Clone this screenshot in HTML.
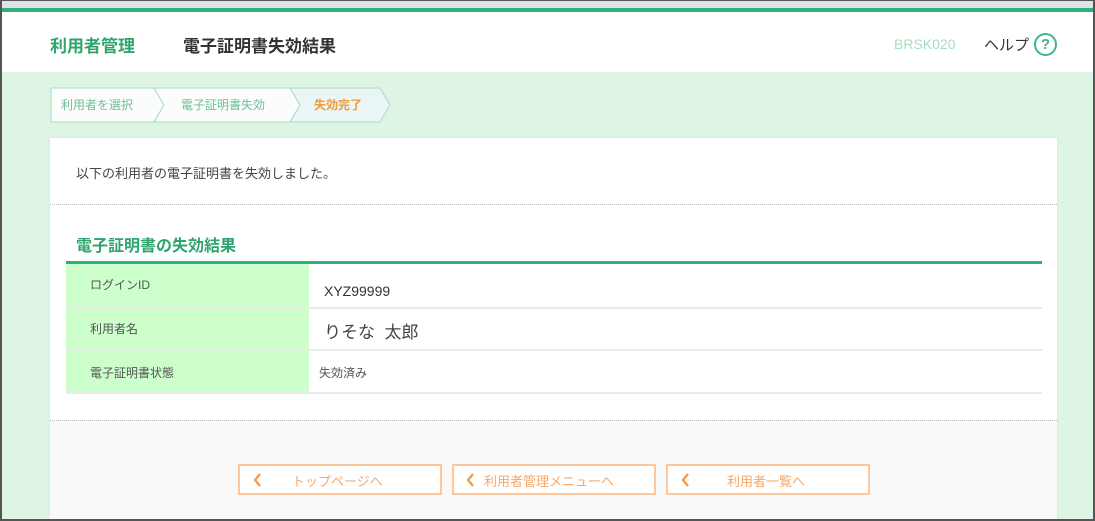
<!DOCTYPE html>
<html><head><meta charset="utf-8"><style>
*{margin:0;padding:0;box-sizing:border-box}
body{width:1095px;height:521px;overflow:hidden;font-family:"Liberation Sans","Noto Sans CJK JP",sans-serif;background:#fff;position:relative}
.abs{position:absolute}
.t{white-space:nowrap}
</style></head><body>
<div class="abs" style="left:0;top:0;width:1095px;height:521px;background:#dff5e3"></div>
<div class="abs" style="left:0;top:0;width:1095px;height:8px;background:#dfe3e6"></div>
<div class="abs" style="left:0;top:8px;width:1095px;height:4px;background:#2fb27a"></div>
<div class="abs" style="left:0;top:12px;width:1095px;height:60px;background:#fff"></div>
<div class="abs t" style="left:50px;top:32px;font-size:17px;font-weight:bold;color:#2fa56e">利用者管理</div>
<div class="abs t" style="left:183px;top:32px;font-size:17px;font-weight:bold;color:#333">電子証明書失効結果</div>
<div class="abs t" style="left:894px;top:36px;font-size:14px;color:#a8dcc0">BRSK020</div>
<div class="abs t" style="left:984px;top:34px;font-size:15px;color:#333">ヘルプ</div>
<div class="abs" style="left:1034px;top:33px;width:23px;height:23px;border:2px solid #3cb887;border-radius:50%;color:#3cb887;font-size:15px;font-weight:bold;text-align:center;line-height:19px">?</div>
<svg class="abs" style="left:50px;top:87px" width="345" height="37">
<polygon points="1,1 104,1 114,18 104,35 1,35" fill="#fafdfb" stroke="#a8dcc0"/>
<polygon points="104,1 240,1 250,18 240,35 104,35 114,18" fill="#fafdfb" stroke="#a8dcc0"/>
<polygon points="240,1 330,1 340,18 330,35 240,35 250,18" fill="#eaf5f7" stroke="#a8dcc0"/>
<text x="11" y="22" font-size="12" fill="#6fbf97" font-family="Liberation Sans,Noto Sans CJK JP,sans-serif">利用者を選択</text>
<text x="131" y="22" font-size="12" fill="#6fbf97" font-family="Liberation Sans,Noto Sans CJK JP,sans-serif">電子証明書失効</text>
<text x="264" y="22" font-size="12" font-weight="bold" fill="#f39a3c" font-family="Liberation Sans,Noto Sans CJK JP,sans-serif">失効完了</text>
</svg>
<div class="abs" style="left:50px;top:138px;width:1007px;height:383px;background:#fff;box-shadow:0 0 2px #cde"></div>
<div class="abs t" style="left:76px;top:163px;font-size:13px;color:#444">以下の利用者の電子証明書を失効しました。</div>
<div class="abs" style="left:50px;top:204px;width:1007px;border-top:1px dotted #bbb"></div>
<div class="abs t" style="left:76px;top:232px;font-size:16px;font-weight:bold;color:#2fa56e">電子証明書の失効結果</div>
<div class="abs" style="left:66px;top:261px;width:976px;height:3px;background:#2fb27a"></div>
<div class="abs" style="left:66px;top:264px;width:243px;height:128px;background:#ccffcc"></div>
<div class="abs" style="left:66px;top:307px;width:976px;height:2px;background:#e8ece9"></div>
<div class="abs" style="left:66px;top:349px;width:976px;height:2px;background:#e8ece9"></div>
<div class="abs" style="left:66px;top:392px;width:976px;height:2px;background:#e8ece9"></div>
<div class="abs t" style="left:90px;top:276px;font-size:12px;color:#555">ログインID</div>
<div class="abs t" style="left:324px;top:283px;font-size:14px;color:#333">XYZ99999</div>
<div class="abs t" style="left:90px;top:320px;font-size:12px;color:#555">利用者名</div>
<div class="abs t" style="left:324px;top:318px;font-size:17px;color:#444">りそな&nbsp;&nbsp;太郎</div>
<div class="abs t" style="left:90px;top:364px;font-size:12px;color:#555">電子証明書状態</div>
<div class="abs t" style="left:319px;top:364px;font-size:12px;color:#555">失効済み</div>
<div class="abs" style="left:50px;top:420px;width:1007px;height:101px;background:#f9f9f9;border-top:1px dotted #bbb"></div>
<div class="abs" style="left:238px;top:464px;width:204px;height:31px;border:2px solid #fcc79a;background:#fff"></div>
<div class="abs" style="left:452px;top:464px;width:204px;height:31px;border:2px solid #fcc79a;background:#fff"></div>
<div class="abs" style="left:666px;top:464px;width:204px;height:31px;border:2px solid #fcc79a;background:#fff"></div>
<svg class="abs" style="left:252px;top:472px" width="10" height="16"><path d="M8,2 L3,8 L8,14" fill="none" stroke="#f39a3c" stroke-width="2.2"/></svg>
<svg class="abs" style="left:465px;top:472px" width="10" height="16"><path d="M8,2 L3,8 L8,14" fill="none" stroke="#f39a3c" stroke-width="2.2"/></svg>
<svg class="abs" style="left:680px;top:472px" width="10" height="16"><path d="M8,2 L3,8 L8,14" fill="none" stroke="#f39a3c" stroke-width="2.2"/></svg>
<div class="abs t" style="left:292px;top:471px;font-size:13px;color:#f5a868">トップページへ</div>
<div class="abs t" style="left:484px;top:471px;font-size:13px;color:#f5a868">利用者管理メニューへ</div>
<div class="abs t" style="left:727px;top:471px;font-size:13px;color:#f5a868">利用者一覧へ</div>
<div class="abs" style="left:0;top:0;width:1095px;height:521px;border:2px solid #555;border-top-width:1px"></div>
</body></html>
